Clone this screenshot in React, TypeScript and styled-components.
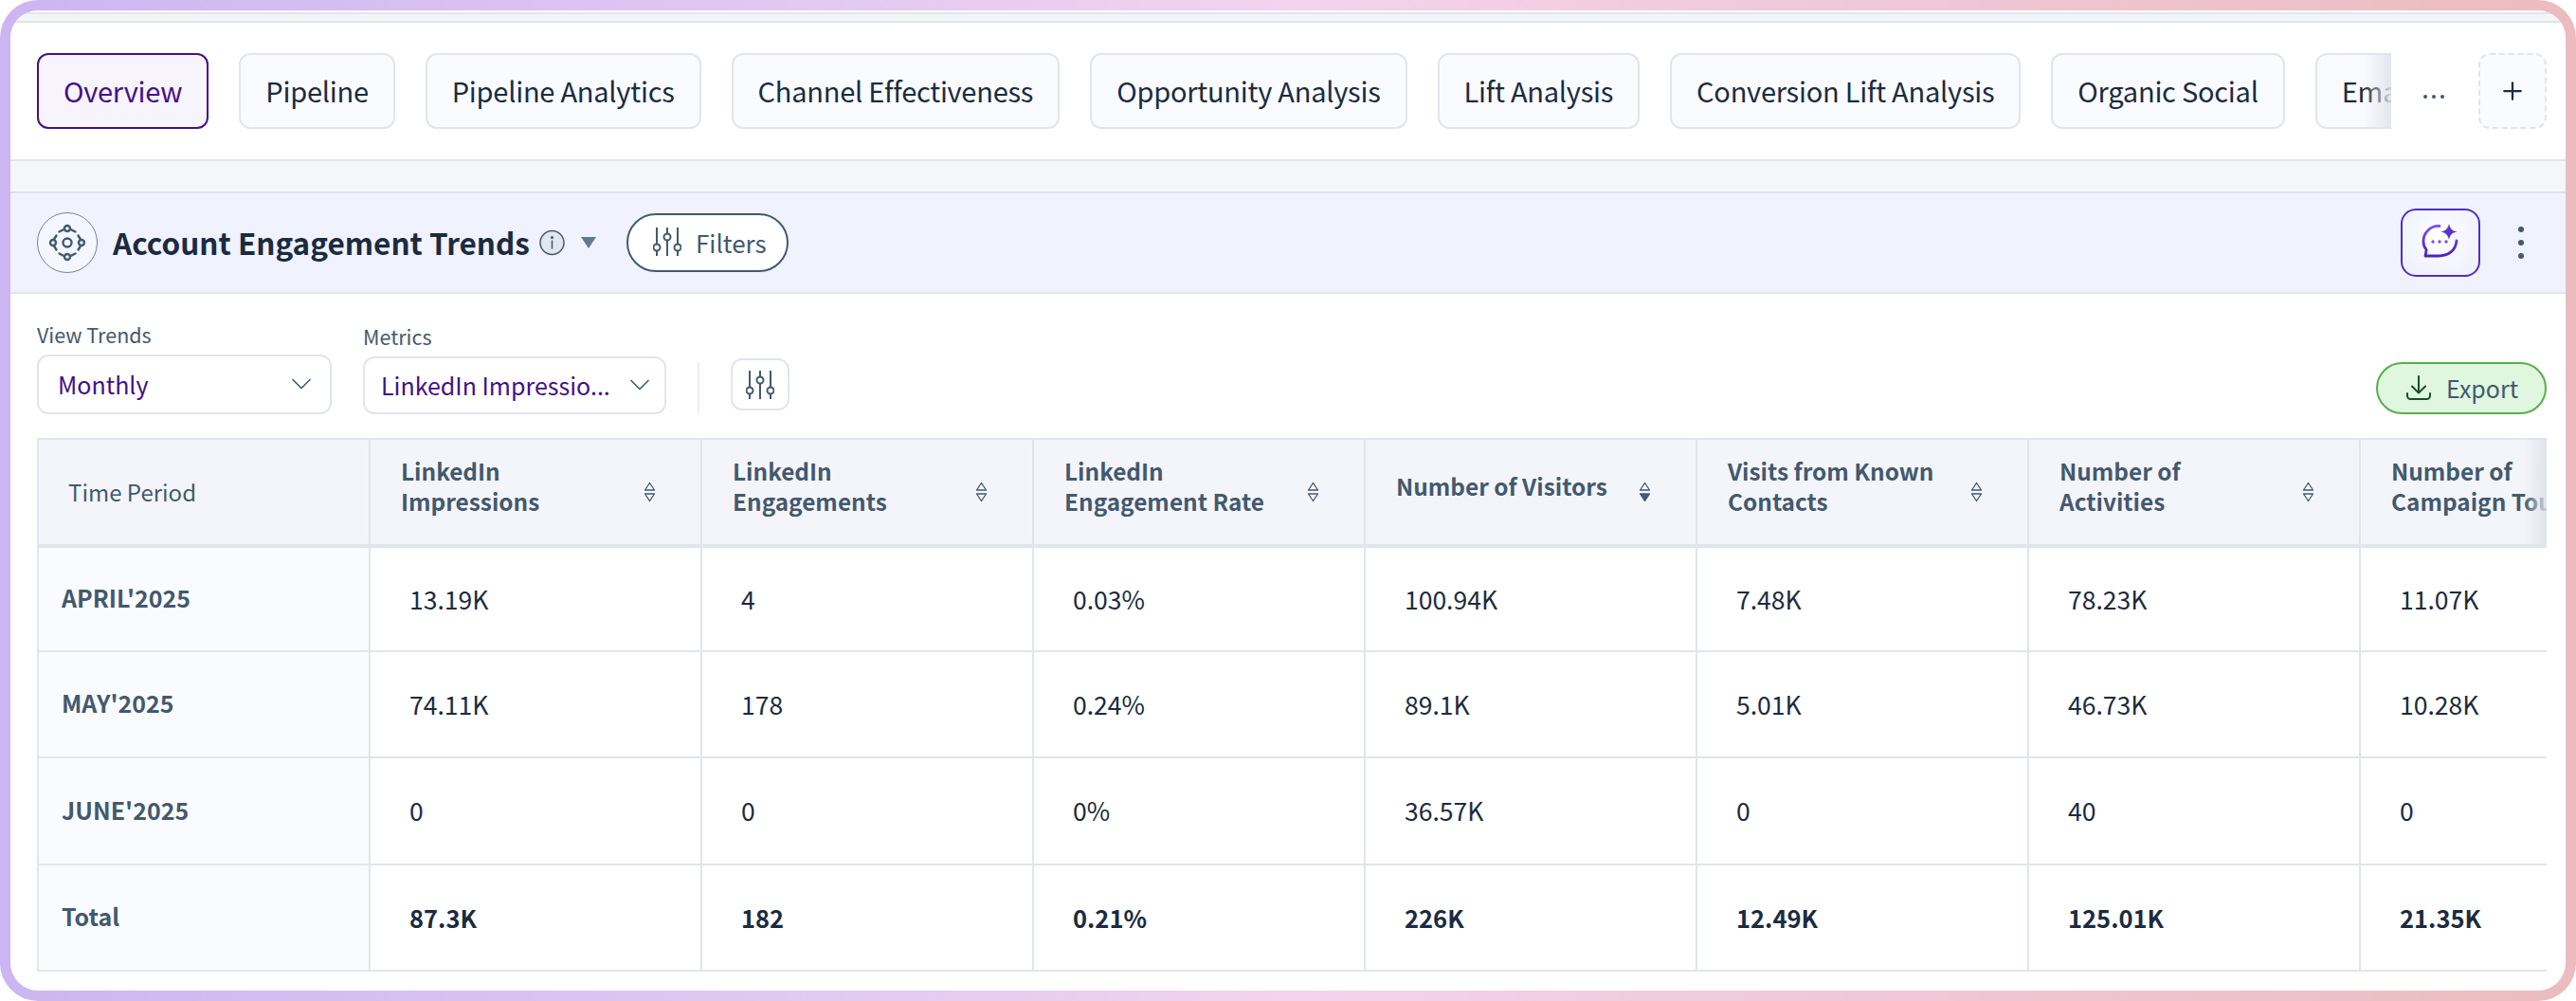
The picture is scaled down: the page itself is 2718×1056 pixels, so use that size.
import React from "react";
import styled, { createGlobalStyle } from "styled-components";
import { ChevronDown, Plus } from "lucide-react";

const FONT = `"Noto Sans CJK SC", "Noto Sans", sans-serif`;
const INK = "#1b2b41";
const SLATE = "#43596e";
const LINE = "#e1e5ec";
const PURPLE = "#42108a";

const Global = createGlobalStyle`
  html, body { margin: 0; padding: 0; background: #fff; }
  * { box-sizing: border-box; }
  body { font-family: ${FONT}; color: ${INK}; }
`;

const Frame = styled.div`
  width: 2718px;
  height: 1056px;
  padding: 11px;
  border-radius: 40px;
  background: linear-gradient(90deg, #cbb6f1 0%, #e0c8f1 30%, #f3d3ee 50%, #efc8d8 72%, #ebbcbe 100%);
`;

const Inner = styled.div`
  height: 100%;
  border-radius: 29px;
  overflow: hidden;
  background: #fff;
  display: flex;
  flex-direction: column;
`;

const TopStrip = styled.div`
  height: 11px;
  margin-top: 2px;
  background: #f4f5f7;
  border-top: 2px solid ${LINE};
  border-bottom: 2px solid ${LINE};
  flex: none;
`;

const TabBar = styled.div`
  height: 146px;
  flex: none;
  display: flex;
  align-items: flex-start;
  padding: 32px 20px 0 28px;
  border-bottom: 2px solid ${LINE};
  background: #fff;
`;

const TabScroller = styled.div`
  position: relative;
  width: 2484px;
  flex: none;
  height: 80px;
  overflow: hidden;
  display: flex;
  gap: 32px;
  &::after {
    content: "";
    position: absolute;
    right: 0;
    top: 0;
    bottom: 0;
    width: 30px;
    background: linear-gradient(90deg, rgba(225, 228, 236, 0), rgba(225, 228, 236, 0.9));
  }
`;

const Tab = styled.div<{ $active?: boolean }>`
  flex: none;
  height: 80px;
  padding: 0 26px 3px;
  display: flex;
  align-items: center;
  border-radius: 12px;
  font-size: 29px;
  letter-spacing: -0.24px;
  white-space: nowrap;
  border: 2px solid ${(p) => (p.$active ? PURPLE : LINE)};
  background: ${(p) => (p.$active ? "#f8f4fe" : "#fafbff")};
  color: ${(p) => (p.$active ? PURPLE : INK)};
`;

const More = styled.div`
  width: 92px;
  flex: none;
  height: 80px;
  display: flex;
  align-items: center;
  justify-content: center;
  gap: 5px;
  padding-top: 12px;
  padding-right: 2px;
`;

const MoreDot = styled.span`
  width: 4px;
  height: 4px;
  border-radius: 50%;
  background: ${SLATE};
`;

const AddTab = styled.div`
  width: 72px;
  height: 80px;
  flex: none;
  display: flex;
  align-items: center;
  justify-content: center;
  border: 2px dashed ${LINE};
  border-radius: 12px;
  background: #fafbff;
  color: ${INK};
`;

const Gap = styled.div`
  height: 32px;
  flex: none;
  background: #f5f6f8;
`;

const SectionHeader = styled.div`
  height: 108px;
  flex: none;
  display: flex;
  align-items: center;
  padding: 0 0 0 28px;
  background: #f0f2fe;
  border-top: 2px solid #dfe1f0;
  border-bottom: 2px solid ${LINE};
`;

const RoundIcon = styled.div`
  width: 64px;
  height: 64px;
  flex: none;
  border-radius: 50%;
  border: 1.5px solid #71859a;
  background: #f5f7fe;
  display: flex;
  align-items: center;
  justify-content: center;
`;

const Title = styled.h1`
  margin: 0 0 3px 16px;
  font-size: 31.5px;
  font-weight: 600;
  color: ${INK};
  white-space: nowrap;
`;

const InfoBadge = styled.span`
  margin-left: 10px;
  display: flex;
`;

const Caret = styled.span`
  margin-left: 17px;
  width: 0;
  height: 0;
  border-left: 8px solid transparent;
  border-right: 8px solid transparent;
  border-top: 12px solid #64798c;
`;

const FilterPill = styled.div`
  margin-left: 32px;
  width: 171px;
  height: 62px;
  border: 2.5px solid ${SLATE};
  border-radius: 31px;
  background: #fff;
  display: flex;
  align-items: center;
  gap: 15px;
  padding: 0 0 2px 26px;
  font-size: 26px;
  color: ${SLATE};
`;

const Spacer = styled.div`
  flex: 1;
`;

const AiButton = styled.div`
  width: 84px;
  height: 72px;
  border: 2.5px solid #4f2fc0;
  border-radius: 16px;
  background: radial-gradient(circle at 50% 40%, #fff 0%, #f0f2fe 75%);
  display: flex;
  align-items: center;
  justify-content: center;
`;

const Kebab = styled.div`
  width: 12px;
  margin: 0 41px 0 37px;
  display: flex;
  flex-direction: column;
  gap: 8px;
  align-items: center;
`;

const KebabDot = styled.span`
  width: 6px;
  height: 6px;
  border-radius: 50%;
  background: ${SLATE};
`;

const Toolbar = styled.div`
  height: 152px;
  flex: none;
  display: flex;
  align-items: flex-end;
  padding: 0 20px 25px 28px;
`;

const Field = styled.div<{ $w: number }>`
  width: ${(p) => p.$w}px;
  flex: none;
  margin-right: 33px;
  display: flex;
  flex-direction: column;
`;

const FieldLabel = styled.label`
  font-size: 21.5px;
  line-height: 26px;
  color: ${SLATE};
  margin-bottom: 8px;
`;

const Select = styled.div<{ $h: number; $pl: number; $pr: number }>`
  height: ${(p) => p.$h}px;
  border: 2px solid ${LINE};
  border-radius: 12px;
  background: #fff;
  display: flex;
  align-items: center;
  justify-content: space-between;
  padding: 0 ${(p) => p.$pr}px 2px ${(p) => p.$pl}px;
  color: ${PURPLE};
  font-size: 25px;
  white-space: nowrap;
`;

const Divider = styled.div`
  width: 2px;
  height: 54px;
  margin-bottom: 1px;
  background: #eceef2;
  flex: none;
`;

const IconSquare = styled.div`
  width: 62px;
  height: 55px;
  margin: 0 0 4px 33px;
  flex: none;
  border: 2px solid ${LINE};
  border-radius: 12px;
  display: flex;
  align-items: center;
  justify-content: center;
  background: #fff;
`;

const ExportButton = styled.div`
  width: 180px;
  height: 55px;
  flex: none;
  border: 2.5px solid #5aad4e;
  border-radius: 28px;
  background: #dff6df;
  display: flex;
  align-items: center;
  gap: 15px;
  padding: 0 0 2px 29px;
  font-size: 25px;
  color: ${SLATE};
`;

const TableWrap = styled.div`
  position: relative;
  margin: 0 20px 0 28px;
  height: 563px;
  overflow: hidden;
  flex: none;
  &::after {
    content: "";
    position: absolute;
    right: 0;
    top: 0;
    height: 112px;
    width: 24px;
    background: linear-gradient(90deg, rgba(222, 225, 234, 0), rgba(222, 225, 234, 0.9));
  }
`;

const Table = styled.table`
  table-layout: fixed;
  width: 2802px;
  border-collapse: separate;
  border-spacing: 0;
  border-left: 2px solid ${LINE};
`;

const Th = styled.th<{ $first?: boolean }>`
  width: 350px;
  height: 116px;
  padding: 0 47px 0 ${(p) => (p.$first ? 31 : 32)}px;
  background: #f4f5fb;
  border-top: 2px solid ${LINE};
  border-right: 2px solid ${LINE};
  border-bottom: 4px solid ${LINE};
  text-align: left;
  color: ${SLATE};
  font-size: ${(p) => (p.$first ? 24 : 24.4)}px;
  font-weight: ${(p) => (p.$first ? 400 : 600)};
  line-height: 32px;
`;

const HeadInner = styled.div`
  display: flex;
  align-items: center;
  justify-content: space-between;
`;

const HeadLabel = styled.span`
  white-space: pre;
  margin-bottom: 12px;
`;

const RowHead = styled.td<{ $h: number }>`
  height: ${(p) => p.$h}px;
  padding: 0 0 4px 24px;
  background: #fafbff;
  border-right: 2px solid ${LINE};
  border-bottom: 2px solid ${LINE};
  color: ${SLATE};
  font-weight: 600;
  font-size: 25px;
`;

const Cell = styled.td<{ $bold?: boolean }>`
  padding: 0 0 2px 41px;
  border-right: 2px solid ${LINE};
  border-bottom: 2px solid ${LINE};
  color: ${INK};
  font-size: ${(p) => (p.$bold ? 25.5 : 26.5)}px;
  font-weight: ${(p) => (p.$bold ? 600 : 400)};
  background: #fff;
`;

const SliderIcon = ({ color }: { color: string }) => (
  <svg width="30" height="30" viewBox="0 0 30 30" fill="none" stroke={color} strokeWidth="2">
    <path d="M4 0.500v17M4 25v4.500M15 0.500v6M15 14v15.500M26 0.500v17M26 25v4.500" strokeLinecap="round" />
    <circle cx="4" cy="21" r="3.500" />
    <circle cx="15" cy="10" r="3.500" />
    <circle cx="26" cy="21" r="3.500" />
  </svg>
);

const SortIcon = ({ active }: { active?: boolean }) => (
  <svg width="13" height="22" viewBox="0 0 13 22" fill="none" stroke={SLATE} strokeWidth="1.3">
    <path d="M6.500 1.500 11.500 9H1.500Z" strokeLinejoin="round" />
    <path d="M6.500 20.500 11.500 13H1.500Z" strokeLinejoin="round" fill={active ? SLATE : "none"} />
  </svg>
);

const InfoIcon = () => (
  <svg width="27" height="28" viewBox="0 0 27 28" fill="#e2e6ee" stroke={SLATE} strokeWidth="1.500">
    <circle cx="13.500" cy="14" r="12.500" />
    <path d="M13.500 12v8" strokeLinecap="round" fill="none" />
    <circle cx="13.500" cy="8.500" r="0.800" fill={SLATE} />
  </svg>
);

const NodesIcon = () => (
  <svg width="40" height="40" viewBox="0 0 40 40" fill="none" stroke={SLATE} strokeWidth="2.400">
    <circle cx="20" cy="20" r="4.500" />
    <circle cx="20" cy="5" r="3" />
    <circle cx="20" cy="35" r="3" />
    <circle cx="5" cy="20" r="3" />
    <circle cx="35" cy="20" r="3" />
    <path
      d="M11.500 8.500 16.500 6M28.500 8.500 23.500 6M11.500 31.500 16.500 34M28.500 31.500 23.500 34M8.500 12.500 6 16.500M8.500 27.500 6 23.500M31.500 12.500 34 16.500M31.500 27.500 34 23.500"
      strokeLinecap="round"
    />
  </svg>
);

const ChatSparkle = () => (
  <svg width="40" height="40" viewBox="0 0 40 40" fill="none">
    <defs>
      <linearGradient id="cs" x1="0" y1="0" x2="0" y2="1">
        <stop offset="0" stopColor="#7a4ff0" />
        <stop offset="1" stopColor="#4a25b5" />
      </linearGradient>
    </defs>
    <path
      d="M19 2.500A16 16 0 0 0 2 19c0 3.400 1.200 6.300 3.200 8.600L4 34h14c10 0 18-5.500 19-16"
      stroke="url(#cs)"
      strokeWidth="2.800"
      strokeLinecap="round"
      strokeLinejoin="round"
    />
    <path d="M29 0c1 5 3 7.500 8.500 8.500-5.500 1-7.500 3.500-8.500 8.500-1-5-3.500-7.500-8.500-8.500C25.500 7.500 28 5 29 0Z" fill="#5a32d0" />
    <circle cx="12" cy="19" r="1.700" fill="#7a4ff0" />
    <circle cx="19" cy="19" r="1.700" fill="#7a4ff0" />
    <circle cx="26" cy="19" r="1.700" fill="#7a4ff0" />
  </svg>
);

const DownloadIcon = () => (
  <svg width="28" height="28" viewBox="0 0 28 28" fill="none" stroke="#1d4a26" strokeWidth="2" strokeLinecap="round" strokeLinejoin="round">
    <path d="M14 2v17M7 12.500 14 19.500 21 12.500" />
    <path d="M2 20v2.500A3.500 3.500 0 0 0 5.500 26h17a3.500 3.500 0 0 0 3.500-3.500V20" />
  </svg>
);

const tabs = [
  "Pipeline",
  "Pipeline Analytics",
  "Channel Effectiveness",
  "Opportunity Analysis",
  "Lift Analysis",
  "Conversion Lift Analysis",
  "Organic Social",
  "Email Analysis",
];

const columns = [
  "LinkedIn\nImpressions",
  "LinkedIn\nEngagements",
  "LinkedIn\nEngagement Rate",
  "Number of Visitors",
  "Visits from Known\nContacts",
  "Number of\nActivities",
  "Number of\nCampaign Touches",
];

const rows = [
  { label: "APRIL'2025", h: 110, values: ["13.19K", "4", "0.03%", "100.94K", "7.48K", "78.23K", "11.07K"] },
  { label: "MAY'2025", h: 112, values: ["74.11K", "178", "0.24%", "89.1K", "5.01K", "46.73K", "10.28K"] },
  { label: "JUNE'2025", h: 113, values: ["0", "0", "0%", "36.57K", "0", "40", "0"] },
  { label: "Total", h: 112, bold: true, values: ["87.3K", "182", "0.21%", "226K", "12.49K", "125.01K", "21.35K"] },
];

export default function App() {
  return (
    <>
      <Global />
      <Frame>
        <Inner>
          <TopStrip />
          <TabBar>
            <TabScroller>
              <Tab $active>Overview</Tab>
              {tabs.map((t) => (
                <Tab key={t}>{t}</Tab>
              ))}
            </TabScroller>
            <More>
              <MoreDot />
              <MoreDot />
              <MoreDot />
            </More>
            <AddTab>
              <Plus size={30} strokeWidth={1.8} />
            </AddTab>
          </TabBar>
          <Gap />
          <SectionHeader>
            <RoundIcon>
              <NodesIcon />
            </RoundIcon>
            <Title>Account Engagement Trends</Title>
            <InfoBadge>
              <InfoIcon />
            </InfoBadge>
            <Caret />
            <FilterPill>
              <SliderIcon color={SLATE} />
              Filters
            </FilterPill>
            <Spacer />
            <AiButton>
              <ChatSparkle />
            </AiButton>
            <Kebab>
              <KebabDot />
              <KebabDot />
              <KebabDot />
            </Kebab>
          </SectionHeader>
          <Toolbar>
            <Field $w={311}>
              <FieldLabel>View Trends</FieldLabel>
              <Select $h={63} $pl={20} $pr={12}>
                Monthly
                <ChevronDown size={36} strokeWidth={1.1} color={SLATE} />
              </Select>
            </Field>
            <Field $w={320}>
              <FieldLabel>Metrics</FieldLabel>
              <Select $h={61} $pl={17} $pr={8}>
                LinkedIn Impressio...
                <ChevronDown size={36} strokeWidth={1.1} color={SLATE} />
              </Select>
            </Field>
            <Divider />
            <IconSquare>
              <SliderIcon color={SLATE} />
            </IconSquare>
            <Spacer />
            <ExportButton>
              <DownloadIcon />
              Export
            </ExportButton>
          </Toolbar>
          <TableWrap>
            <Table>
              <thead>
                <tr>
                  <Th $first>Time Period</Th>
                  {columns.map((c, i) => (
                    <Th key={c}>
                      <HeadInner>
                        <HeadLabel>{c}</HeadLabel>
                        <SortIcon active={i === 3} />
                      </HeadInner>
                    </Th>
                  ))}
                </tr>
              </thead>
              <tbody>
                {rows.map((r) => (
                  <tr key={r.label}>
                    <RowHead $h={r.h}>{r.label}</RowHead>
                    {r.values.map((v, i) => (
                      <Cell key={i} $bold={r.bold}>
                        {v}
                      </Cell>
                    ))}
                  </tr>
                ))}
              </tbody>
            </Table>
          </TableWrap>
        </Inner>
      </Frame>
    </>
  );
}
